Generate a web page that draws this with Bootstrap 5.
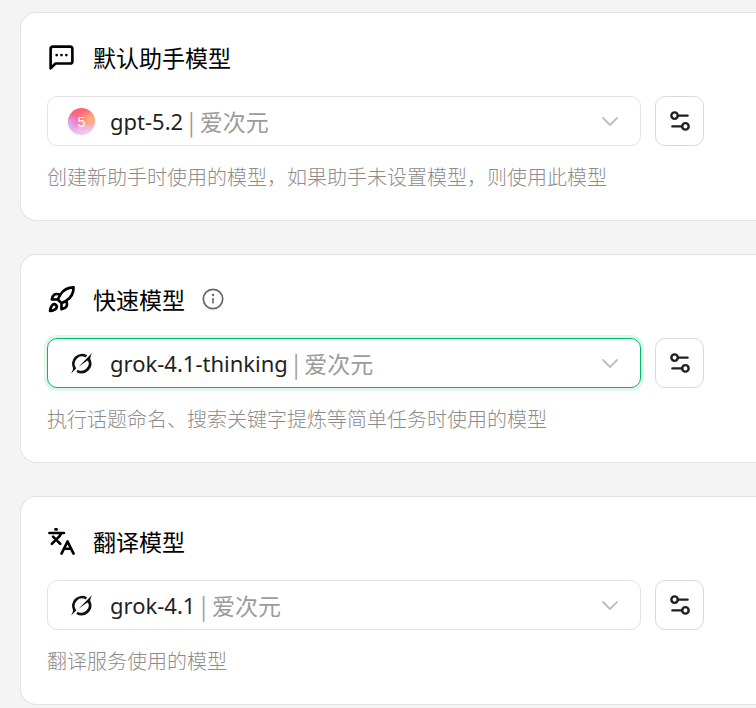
<!DOCTYPE html>
<html lang="zh-CN">
<head>
<meta charset="utf-8">
<meta name="viewport" content="width=device-width, initial-scale=1">
<title>默认模型</title>
<link href="https://cdn.jsdelivr.net/npm/bootstrap@5.3.0/dist/css/bootstrap.min.css" rel="stylesheet">
<style>
  body { background: #f4f4f4; color: #000; font-family: "Noto Sans", "Noto Sans CJK SC", sans-serif; }
  .settings-page { padding: 12px 0 0 20px; gap: 33px; }
  .setting-group { background: #fff; border: 1px solid #e3e3e3; border-right: 0; border-radius: 16px 0 0 16px; padding: 26px 52px 28px 26px; }
  .group-title { font: 400 23px/36px "Noto Sans CJK SC", sans-serif; gap: 17px; margin-bottom: 21px; }
  .picker-row { gap: 14px; }
  .picker { height: 50px; padding: 0 22px 0 20px; border: 1px solid #e3e3e3; border-radius: 10px; background: #fff; font-size: 22px; line-height: 32px; }
  .picker.active, .picker:focus-within { border-color: #00b96b; box-shadow: 0 0 0 3px #dff8ea; }
  .picker select { inset: 0; cursor: pointer; }
  .model-icon { width: 27px; margin-right: 15px; }
  .model-name { color: #1f1f1f; }
  .provider { color: #9b9b9b; font: 400 23px/32px "Noto Sans CJK SC", sans-serif; }
  .tune { width: 49px; height: 50px; border: 1px solid #d9d9d9; border-radius: 10px; background: #fff; color: #1f1f1f; }
  .hint { color: #8c8c8c; font: 300 20px/30px "Noto Sans CJK SC", sans-serif; margin-top: 16px; }
  .info { color: #666; }
  .line-icon { fill: none; stroke: currentColor; stroke-width: 2.2; stroke-linecap: round; stroke-linejoin: round; flex: none; }
  .chevron { stroke: #bfbfbf; stroke-width: 1.8; }
</style>
<script src="https://cdn.jsdelivr.net/npm/bootstrap@5.3.0/dist/js/bootstrap.bundle.min.js"></script>
</head>
<body>
<svg class="d-none" aria-hidden="true">
  <symbol id="grok" viewBox="0 0 21 21">
    <path fill="none" stroke="#111" stroke-width="2.7" d="M3.6 15.2A8.6 8.6 0 0 1 15.4 3.4M6 17.8A8.6 8.6 0 0 0 18.3 7"/>
    <path fill="#111" d="M.2 20.6C1 18.2 2.4 16.8 2.3 14L4.8 14.4 5.2 15.4zM7.6 13.8L21 .1C19.6 2.8 19 5 19.4 7.6L17 8.4 16.4 7.4z"/>
  </symbol>
  <symbol id="sliders" viewBox="0 0 24 24"><path d="M14 17H5M19 7h-9"/><circle cx="17" cy="17" r="3"/><circle cx="7" cy="7" r="3"/></symbol>
  <symbol id="chevron" viewBox="0 0 16 9"><path d="M1 1l7 7 7-7"/></symbol>
</svg>
<main class="settings-page d-flex flex-column">
  <section class="setting-group">
    <h2 class="group-title d-flex align-items-center">
      <svg class="line-icon" width="29" height="29" viewBox="0 0 24 24" aria-hidden="true"><path d="M21 15a2 2 0 0 1-2 2H7l-4 4V5a2 2 0 0 1 2-2h14a2 2 0 0 1 2 2zM8 10h.01M12 10h.01M16 10h.01"/></svg>
      <label for="default-model">默认助手模型</label>
    </h2>
    <div class="picker-row d-flex">
      <div class="picker position-relative d-flex align-items-center flex-grow-1">
        <span class="model-icon d-flex justify-content-center">
          <svg width="27" height="27" viewBox="0 0 27 27" aria-hidden="true">
            <defs>
              <linearGradient id="orb" x1="0.35" y1="0" x2="0.6" y2="1"><stop offset="0" stop-color="#fb5f74"/><stop offset=".5" stop-color="#fb7f88"/><stop offset=".72" stop-color="#f3b0e0"/><stop offset="1" stop-color="#ecd0ff"/></linearGradient>
              <radialGradient id="glow-orange" cx=".82" cy=".42" r=".36"><stop offset="0" stop-color="#ffb878"/><stop offset="1" stop-color="#ffb367" stop-opacity="0"/></radialGradient>
              <radialGradient id="glow-magenta" cx=".2" cy=".5" r=".3"><stop offset="0" stop-color="#f765c8"/><stop offset="1" stop-color="#f765c8" stop-opacity="0"/></radialGradient>
              <radialGradient id="glow-violet" cx="0" cy=".65" r=".45"><stop offset="0" stop-color="#c3c4ff"/><stop offset="1" stop-color="#e0b0ff" stop-opacity="0"/></radialGradient>
            </defs>
            <circle cx="13.5" cy="13.5" r="13.5" fill="url(#orb)"/><circle cx="13.5" cy="13.5" r="13.5" fill="url(#glow-orange)"/><circle cx="13.5" cy="13.5" r="13.5" fill="url(#glow-magenta)"/><circle cx="13.5" cy="13.5" r="13.5" fill="url(#glow-violet)"/>
            <text x="13.5" y="19" text-anchor="middle" fill="#fff" font-family="Liberation Sans, sans-serif" font-size="14">5</text>
          </svg>
        </span>
        <span class="model-name">gpt-5.2</span><span class="provider">&nbsp;| 爱次元</span>
        <svg class="line-icon chevron ms-auto" width="16" height="9" aria-hidden="true"><use href="#chevron"/></svg>
        <select id="default-model" class="position-absolute w-100 h-100 opacity-0"><option>gpt-5.2 | 爱次元</option></select>
      </div>
      <button type="button" class="tune btn p-0 d-flex align-items-center justify-content-center" aria-label="默认助手模型设置"><svg class="line-icon" width="26" height="26" aria-hidden="true"><use href="#sliders"/></svg></button>
    </div>
    <p class="hint mb-0">创建新助手时使用的模型，如果助手未设置模型，则使用此模型</p>
  </section>

  <section class="setting-group">
    <h2 class="group-title d-flex align-items-center">
      <svg class="line-icon" width="29" height="29" viewBox="0 0 24 24" aria-hidden="true"><path d="M4.5 16.5c-1.5 1.26-2 5-2 5s3.74-.5 5-2c.71-.84.7-2.13-.09-2.91a2.18 2.18 0 0 0-2.91-.09zM12 15l-3-3a22 22 0 0 1 2-3.95A12.88 12.88 0 0 1 22 2c0 2.72-.78 7.5-6 11a22.35 22.35 0 0 1-4 2zM9 12H4s.55-3.03 2-4c1.62-1.08 5 0 5 0M12 15v5s3.03-.55 4-2c1.08-1.62 0-5 0-5"/></svg>
      <label for="fast-model">快速模型</label>
      <svg class="info" width="22" height="22" viewBox="0 0 22 22" role="img" aria-label="说明"><circle cx="11" cy="11" r="9.7" fill="none" stroke="currentColor" stroke-width="1.7"/><circle cx="11" cy="7" r="1.2" fill="currentColor"/><path d="M11 10v5.6" stroke="currentColor" stroke-width="1.6"/></svg>
    </h2>
    <div class="picker-row d-flex">
      <div class="picker active position-relative d-flex align-items-center flex-grow-1">
        <span class="model-icon d-flex justify-content-center"><svg width="21" height="21" aria-hidden="true"><use href="#grok"/></svg></span>
        <span class="model-name">grok-4.1-thinking</span><span class="provider">&nbsp;| 爱次元</span>
        <svg class="line-icon chevron ms-auto" width="16" height="9" aria-hidden="true"><use href="#chevron"/></svg>
        <select id="fast-model" class="position-absolute w-100 h-100 opacity-0"><option>grok-4.1-thinking | 爱次元</option></select>
      </div>
      <button type="button" class="tune btn p-0 d-flex align-items-center justify-content-center" aria-label="快速模型设置"><svg class="line-icon" width="26" height="26" aria-hidden="true"><use href="#sliders"/></svg></button>
    </div>
    <p class="hint mb-0">执行话题命名、搜索关键字提炼等简单任务时使用的模型</p>
  </section>

  <section class="setting-group">
    <h2 class="group-title d-flex align-items-center">
      <svg class="line-icon" width="29" height="29" viewBox="0 0 24 24" aria-hidden="true"><path d="M5 8l6 6M4 14l6-6 2-3M2 5h12M7 2h1M22 22l-5-10-5 10M14 18h6"/></svg>
      <label for="translate-model">翻译模型</label>
    </h2>
    <div class="picker-row d-flex">
      <div class="picker position-relative d-flex align-items-center flex-grow-1">
        <span class="model-icon d-flex justify-content-center"><svg width="21" height="21" aria-hidden="true"><use href="#grok"/></svg></span>
        <span class="model-name">grok-4.1</span><span class="provider">&nbsp;| 爱次元</span>
        <svg class="line-icon chevron ms-auto" width="16" height="9" aria-hidden="true"><use href="#chevron"/></svg>
        <select id="translate-model" class="position-absolute w-100 h-100 opacity-0"><option>grok-4.1 | 爱次元</option></select>
      </div>
      <button type="button" class="tune btn p-0 d-flex align-items-center justify-content-center" aria-label="翻译模型设置"><svg class="line-icon" width="26" height="26" aria-hidden="true"><use href="#sliders"/></svg></button>
    </div>
    <p class="hint mb-0">翻译服务使用的模型</p>
  </section>
</main>
</body>
</html>
